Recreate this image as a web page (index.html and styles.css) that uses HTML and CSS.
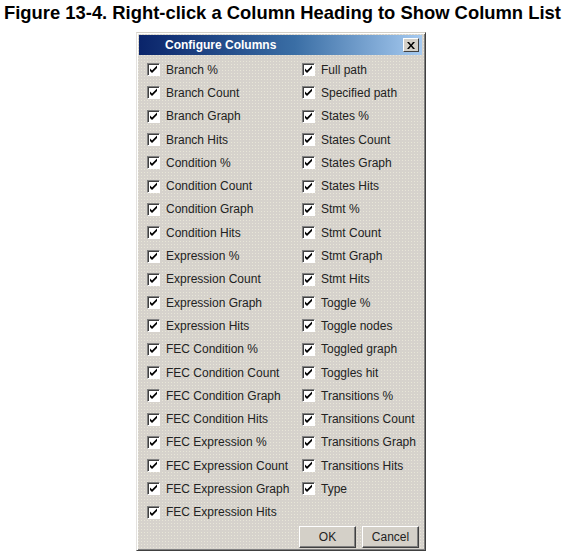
FILE: index.html
```html
<!DOCTYPE html>
<html>
<head>
<meta charset="utf-8">
<link rel="stylesheet" href="styles.css">
</head>
<body>
<h1 class="caption">Figure 13-4. Right-click a Column Heading to Show Column List</h1>
<div class="dialog">
  <div class="titlebar">
    <span class="title">Configure Columns</span>
    <span class="close"><svg width="8" height="7" viewBox="0 0 8 7"><path d="M0 0h2l2 2.5L6 0h2L5 3.5 8 7H6L4 4.5 2 7H0l3-3.5z" fill="#000"/></svg></span>
  </div>
  <div class="list">
    <label class="item"><span class="cb"></span>Branch %</label>
    <label class="item"><span class="cb"></span>Branch Count</label>
    <label class="item"><span class="cb"></span>Branch Graph</label>
    <label class="item"><span class="cb"></span>Branch Hits</label>
    <label class="item"><span class="cb"></span>Condition %</label>
    <label class="item"><span class="cb"></span>Condition Count</label>
    <label class="item"><span class="cb"></span>Condition Graph</label>
    <label class="item"><span class="cb"></span>Condition Hits</label>
    <label class="item"><span class="cb"></span>Expression %</label>
    <label class="item"><span class="cb"></span>Expression Count</label>
    <label class="item"><span class="cb"></span>Expression Graph</label>
    <label class="item"><span class="cb"></span>Expression Hits</label>
    <label class="item"><span class="cb"></span>FEC Condition %</label>
    <label class="item"><span class="cb"></span>FEC Condition Count</label>
    <label class="item"><span class="cb"></span>FEC Condition Graph</label>
    <label class="item"><span class="cb"></span>FEC Condition Hits</label>
    <label class="item"><span class="cb"></span>FEC Expression %</label>
    <label class="item"><span class="cb"></span>FEC Expression Count</label>
    <label class="item"><span class="cb"></span>FEC Expression Graph</label>
    <label class="item"><span class="cb"></span>FEC Expression Hits</label>
    <label class="item"><span class="cb"></span>Full path</label>
    <label class="item"><span class="cb"></span>Specified path</label>
    <label class="item"><span class="cb"></span>States %</label>
    <label class="item"><span class="cb"></span>States Count</label>
    <label class="item"><span class="cb"></span>States Graph</label>
    <label class="item"><span class="cb"></span>States Hits</label>
    <label class="item"><span class="cb"></span>Stmt %</label>
    <label class="item"><span class="cb"></span>Stmt Count</label>
    <label class="item"><span class="cb"></span>Stmt Graph</label>
    <label class="item"><span class="cb"></span>Stmt Hits</label>
    <label class="item"><span class="cb"></span>Toggle %</label>
    <label class="item"><span class="cb"></span>Toggle nodes</label>
    <label class="item"><span class="cb"></span>Toggled graph</label>
    <label class="item"><span class="cb"></span>Toggles hit</label>
    <label class="item"><span class="cb"></span>Transitions %</label>
    <label class="item"><span class="cb"></span>Transitions Count</label>
    <label class="item"><span class="cb"></span>Transitions Graph</label>
    <label class="item"><span class="cb"></span>Transitions Hits</label>
    <label class="item"><span class="cb"></span>Type</label>
  </div>
  <div class="buttons">
    <button class="btn">OK</button>
    <button class="btn">Cancel</button>
  </div>
</div>
</body>
</html>
```
FILE: styles.css
```css
html, body {
  margin: 0;
  padding: 0;
  background: #fff;
}
.caption {
  margin: 0;
  padding: 3px 0 0 4px;
  height: 29px;
  box-sizing: border-box;
  font-family: "Liberation Sans", Arial, sans-serif;
  font-weight: bold;
  font-size: 18.4px;
  line-height: 20px;
  color: #000;
  white-space: nowrap;
}
.dialog {
  margin: 3px 0 0 136px;
  width: 290px;
  height: 519px;
  box-sizing: border-box;
  background-color: #d6d2cc;
  background-image: radial-gradient(circle, #e8e6d8 0.6px, transparent 0.9px);
  background-size: 3px 3px;
  border-top: 1px solid #d4d0c8;
  border-left: 1px solid #e4e2de;
  border-right: 1px solid #404040;
  border-bottom: 1px solid #404040;
  box-shadow: inset 1px 1px 0 #fff, inset -1px -1px 0 #808080;
  padding: 2px 3px 2px 2px;
  display: flex;
  flex-direction: column;
  font-family: "Liberation Sans", Arial, sans-serif;
  font-size: 12px;
  color: #000;
}
.titlebar {
  height: 20px;
  flex: none;
  background: linear-gradient(to right, #0a246a, #3a6ea5 55%, #a6caf0);
  display: flex;
  align-items: center;
  justify-content: space-between;
  padding: 0 3px 0 26px;
}
.title {
  color: #fff;
  font-weight: bold;
  font-size: 12px;
}
.close {
  width: 16px;
  height: 14px;
  box-sizing: border-box;
  background: #d4d0c8;
  border-top: 1px solid #fff;
  border-left: 1px solid #fff;
  border-right: 1px solid #404040;
  border-bottom: 1px solid #404040;
  display: flex;
  align-items: center;
  justify-content: center;
}
.list {
  display: grid;
  grid-template-rows: repeat(20, 23.3px);
  grid-template-columns: 155px 1fr;
  grid-auto-flow: column;
  padding: 3px 0 0 8px;
}
.item {
  display: flex;
  align-items: center;
  gap: 6px;
  white-space: nowrap;
  color: #222;
}
.cb {
  width: 13px;
  height: 13px;
  box-sizing: border-box;
  flex: none;
  background: #fff url("data:image/svg+xml,%3Csvg xmlns='http://www.w3.org/2000/svg' width='11' height='11' viewBox='0 0 11 11'%3E%3Cpath d='M2 4.5l2 2 5-5v2.5L4 9 2 7z' fill='%23000'/%3E%3C/svg%3E") no-repeat 0 0;
  border-top: 1px solid #808080;
  border-left: 1px solid #808080;
  border-right: 1px solid #fff;
  border-bottom: 1px solid #fff;
  box-shadow: inset 1px 1px 0 #404040;
}
.buttons {
  margin-top: auto;
  display: flex;
  justify-content: flex-end;
  gap: 6px;
  padding: 0 3px 0 0;
}
.btn {
  width: 57px;
  height: 22px;
  box-sizing: border-box;
  background: #d4d0c8;
  border-top: 1px solid #fff;
  border-left: 1px solid #fff;
  border-right: 1px solid #404040;
  border-bottom: 1px solid #404040;
  box-shadow: inset -1px -1px 0 #808080;
  font-family: "Liberation Sans", Arial, sans-serif;
  font-size: 12px;
  color: #222;
  padding: 0;
}
```
